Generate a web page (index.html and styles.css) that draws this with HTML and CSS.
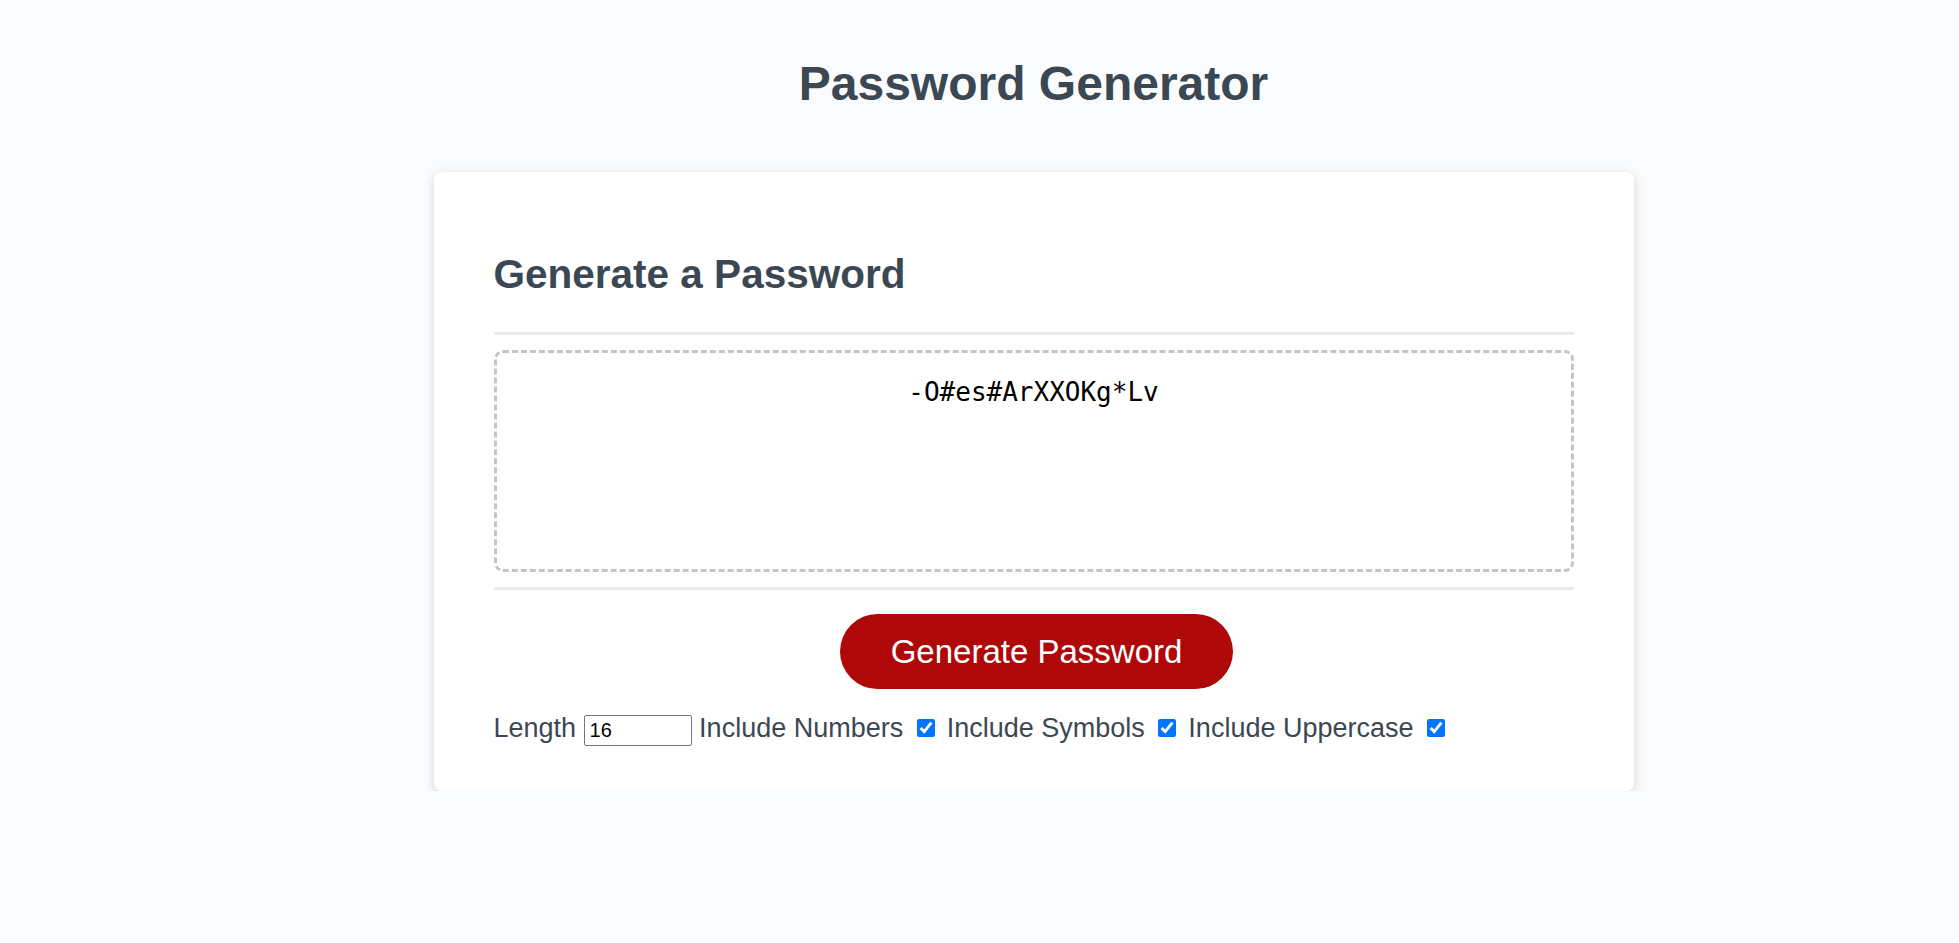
FILE: index.html
```html
<!DOCTYPE html>
<html lang="en">
<head>
<meta charset="UTF-8">
<title>Password Generator</title>
<link rel="stylesheet" href="styles.css">
</head>
<body>
<div class="wrapper">
  <header class="page-header">
    <h1 class="page-title">Password Generator</h1>
  </header>
  <div class="card">
    <div class="card-header">
      <h2 class="card-title">Generate a Password</h2>
    </div>
    <div class="card-body">
      <textarea readonly class="password" aria-label="Generated Password">-O#es#ArXXOKg*Lv</textarea>
    </div>
    <div class="card-footer">
      <button class="btn" type="button">Generate Password</button>
    </div>
    <div class="options">
      <label class="opt">Length <input type="text" class="length" value="16"></label>
      <label class="opt">Include Numbers <input type="checkbox" class="check" checked></label>
      <label class="opt">Include Symbols <input type="checkbox" class="check" checked></label>
      <label class="opt">Include Uppercase <input type="checkbox" class="check" checked></label>
    </div>
  </div>
</div>
</body>
</html>
```
FILE: styles.css
```css
* {
  box-sizing: border-box;
}

html, body {
  margin: 0;
  padding: 0;
}

body {
  background-color: #f9fbfd;
  font-family: "Liberation Sans", Arial, sans-serif;
  color: #3b4853;
}

.wrapper {
  padding: 56px 0 0 108px;
}

.page-header {
  text-align: center;
  margin-bottom: 61px;
}

.page-title {
  margin: 0;
  font-size: 48px;
  line-height: 55px;
  font-weight: bold;
  color: #3b4853;
}

.card {
  width: 1200px;
  margin: 0 auto;
  background: #ffffff;
  border-radius: 7.5px;
  box-shadow: rgba(0, 0, 0, 0.15) 0 3px 12px 0;
  padding: 45px 60px;
  font-size: 27px;
  color: #3b4853;
}

.card-title {
  margin: 34px 0 35px;
  font-size: 40.5px;
  line-height: 46px;
  font-weight: bold;
}

.card-header::after {
  content: "";
  display: block;
  height: 3px;
  background: #e7e9eb;
}

.card-body {
  padding: 15px 0;
}

.password {
  display: block;
  width: 100%;
  height: 222px;
  margin: 0;
  border: 3px dashed #c1c6cd;
  border-radius: 9px;
  padding: 24px 22px 0;
  resize: none;
  overflow: hidden;
  font-family: "DejaVu Sans Mono", "Liberation Mono", monospace;
  font-size: 26px;
  color: #000;
  text-align: center;
  background: #fff;
  outline: none;
}

.card-footer {
  text-align: center;
}

.card-footer::before {
  content: "";
  display: block;
  height: 3px;
  background: #e7e9eb;
}

.btn {
  display: inline-block;
  border: none;
  background-color: #af0808;
  color: #ffffff;
  border-radius: 37.5px;
  font-family: "Liberation Sans", Arial, sans-serif;
  font-size: 33px;
  line-height: 33px;
  padding: 21px 51px;
  margin: 24px 24px 24px 30px;
  cursor: pointer;
}

.options {
  line-height: 31px;
}

.length {
  width: 108px;
  height: 31px;
  border: 1px solid #767676;
  border-radius: 2px;
  padding: 0 3px 0 5px;
  margin: 0;
  font-family: "Liberation Sans", Arial, sans-serif;
  font-size: 20px;
  color: #000;
  background: #fff;
  vertical-align: baseline;
}

.check {
  width: 18px;
  height: 18px;
  margin: 0 4.5px 0 6px;
  vertical-align: baseline;
  accent-color: #0075ff;
}
```
